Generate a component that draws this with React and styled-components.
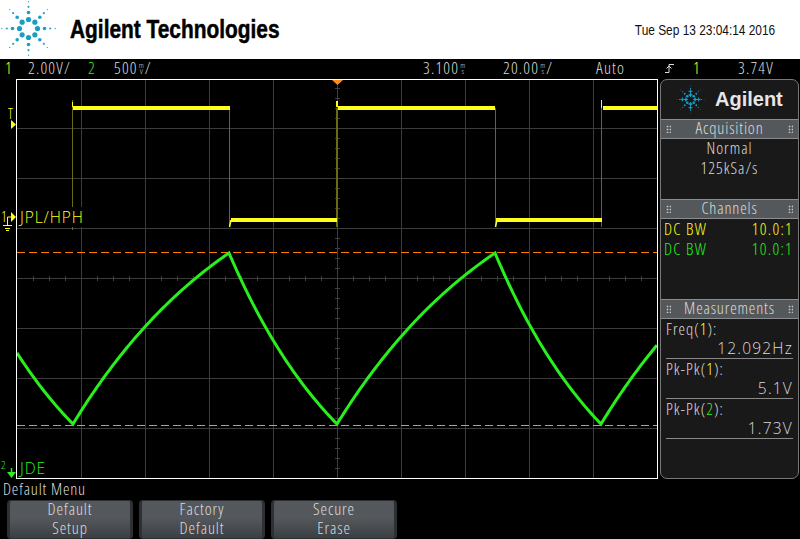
import React from 'react';
import styled, { createGlobalStyle } from 'styled-components';

const Global = createGlobalStyle`
  html, body { margin: 0; padding: 0; background: #000; }
  #root { width: 800px; height: 539px; overflow: hidden; }
`;
const UI = `"Open Sans", "Liberation Sans", sans-serif`;
const Y = '#ffff1e';
const G = '#27f01c';
const Page = styled.div`
  width: 800px; height: 539px; display: flex; flex-direction: column;
  background: #000; font-family: ${UI}; font-weight: 300; font-stretch: 75%; font-size: 16.5px; color: #dcdcdc;
`;
const Header = styled.header`
  height: 59px; background: #fff; display: flex; align-items: center; color: #000; flex: none;
`;
const LogoSlot = styled.div`width: 70px; height: 59px; flex: none;`;
const Brand = styled.h1`
  margin: 0; font: 700 25px "Liberation Sans", sans-serif; color: #000; white-space: nowrap; flex: 1;
  transform: scaleX(.835); transform-origin: left center; -webkit-text-stroke: .5px #000;
`;
const Clock = styled.div`
  font: 400 14.5px "Liberation Sans", sans-serif; margin-right: 25px; white-space: nowrap; color: #111;
  transform: scaleX(.82); transform-origin: right center;
`;
const Status = styled.div`
  height: 20px; flex: none; display: grid; letter-spacing: 1.2px; line-height: 18px; padding-left: 5px; box-sizing: border-box;
  grid-template-columns: 23px 60px 26px 309px 80px 93px 69px 28px 45px auto;
`;
const Value = styled.span`color: ${p => p.$c || '#dcdcdc'}; white-space: nowrap; display: flex; align-items: center; height: 18px;`;
const Unit = styled.span`
  display: flex; flex-direction: column; font-size: 8px; line-height: 6px; letter-spacing: 0; text-align: center; margin: 0 1px;
`;
const Main = styled.div`height: 400px; flex: none; display: flex; align-items: flex-start;`;
const Scope = styled.div`
  position: relative; width: 642px; flex: none; margin-left: 16px; height: 400px; border: 1px solid #fff; box-sizing: border-box;
  & > svg { display: block; }
`;
const ScopeLabel = styled.span`
  position: absolute; left: 0; top: ${p => p.$t}px; height: 20px; padding-left: 3px; background: #000; color: ${p => p.$c}; font-stretch: 100%; font-size: 15.5px; letter-spacing: .9px; line-height: 20px; white-space: nowrap;
`;
const GutterText = styled.span`
  position: absolute; left: ${p => p.$l}px; top: ${p => p.$t}px; color: ${p => p.$c}; font-size: ${p => p.$s}px; line-height: 12px;
`;
const Gutter = styled.svg`position: absolute; left: -17px; top: 0; overflow: visible;`;
const Side = styled.aside`
  width: 139px; margin-left: 2px; height: 400px; box-sizing: border-box; background: #191919; border: 1px solid #777; border-radius: 7px; display: flex; flex-direction: column; overflow: hidden;
`;
const SideLogo = styled.div`height: 39px; display: flex; align-items: center; gap: 10px; padding-left: 15px; color: #e6e6e6; font: 700 20px "Liberation Sans", sans-serif; flex: none;`;
const SecHead = styled.div`
  height: 20px; box-sizing: border-box; flex: none; background: #54585b; border: solid #8a8d8f; border-width: 1px 0; color: #dcdcdc; text-align: center; line-height: 16px; letter-spacing: .85px; position: relative;
  &::before, &::after { content: ''; position: absolute; top: 5px; width: 5px; height: 8px; background: radial-gradient(circle, #c4c4c4 0.8px, transparent 1.1px) 0 0 / 3px 3px; }
  &::before { left: 5px; } &::after { right: 5px; }
`;
const Sec = styled.section`height: ${p => p.$h}px; flex: none; box-sizing: border-box; letter-spacing: 1px;`;
const Center = styled.div`text-align: center; line-height: 20px; color: #dcdcdc; position: relative; top: -1px;`;
const Chan = styled.div`display: flex; justify-content: space-between; color: ${p => p.$c}; line-height: 20px; padding: 0 5px 0 3px; letter-spacing: 1.3px;`;
const MeasName = styled.div`line-height: 19px; padding-left: 5px; color: #dcdcdc; height: 20px;`;
const MeasVal = styled.div`line-height: 19px; height: 20px; box-sizing: border-box; margin: 0 5px; text-align: right; border-bottom: 1px solid #8a8a8a; color: #dcdcdc; font-stretch: 100%; font-size: 15.5px; letter-spacing: 1.2px;`;
const C = styled.span`color: ${p => p.$c};`;
const Footer = styled.footer`flex: none; height: 60px; padding-left: 3px; display: flex; flex-direction: column;`;
const MenuTitle = styled.div`height: 21px; line-height: 19px; color: #dcdcdc; letter-spacing: .8px;`;
const Keys = styled.div`display: flex; gap: 6px; padding-left: 4px;`;
const Key = styled.button`
  width: 126px; height: 39px; padding: 0 0 4px; box-sizing: border-box; display: flex; flex-direction: column; align-items: center; justify-content: center;
  border: 1px solid #2e3134; border-width: 1px 3px; border-radius: 4px; color: #dcdcdc; font: inherit; line-height: 19px; letter-spacing: .9px;
  background: linear-gradient(#54585c 0%, #54585c 45%, #3c3f42 100%);
`;

function Spark({ size, cross }) {
  const c = 28.5;
  const rings = [
    { r: 9, s: 2.6, col: '#1b9cc0' },
    { r: 16, s: 1.8, col: '#1f9dc3' },
    { r: 21.7, s: 1.1, col: '#2aa3c8' },
    { r: 26.7, s: .7, col: '#3dabcc' },
  ];
  const dots = [];
  rings.forEach((g, i) => {
    for (let k = 0; k < 8; k++) {
      const a = k * 45 * Math.PI / 180;
      const x = c + g.r * Math.cos(a), y = c + g.r * Math.sin(a);
      const axis = k % 2 === 0;
      dots.push(<circle key={i + '-' + k} cx={x} cy={y} r={g.s} fill={g.col} />);
      if (cross && axis && i < 2) {
        dots.push(<path key={'x' + i + k} d={`M${x - 4} ${y}H${x + 4}M${x} ${y - 4}V${y + 4}`} stroke={g.col} strokeWidth="1.8" />);
      }
    }
  });
  return <svg width={size} height={size} viewBox="0 0 57 57">{dots}</svg>;
}

const X = x => x - 17;
const Yc = y => y - 80;

function wavePoints() {
  const up = 180, dn = 130;
  const rise = t => (1 - Math.exp(-t / up)) / (1 - Math.exp(-156 / up));
  const fall = t => (Math.exp(-t / dn) - Math.exp(-108 / dn)) / (1 - Math.exp(-108 / dn));
  const pts = [];
  for (let x = 17; x < 73; x += 2) pts.push([x, 424 - fall(x - 17 + 52) * 171]);
  const segs = [[73, 229, 1], [229, 337, 0], [337, 495, 1], [495, 601, 0], [601, 657, 1]];
  segs.forEach(([a, b, r]) => {
    for (let x = a; x < b; x += 2) pts.push([x, 424 - (r ? rise((x - a) * 156 / (b - a > 100 ? b - a : 156)) : fall((x - a) * 108 / (b - a))) * 171]);
  });
  pts.push([657, 424 - rise(56) * 171]);
  return pts.map(([x, y]) => `${X(x)},${Yc(y)}`).join(' ');
}

function Plot() {
  const vs = [81, 145, 209, 273, 337, 401, 465, 529, 593];
  const hs = [128, 178, 228, 278, 328, 378, 428];
  const ticks = [];
  for (let x = 33; x <= 657; x += 16) if ((x - 17) % 64 !== 0) ticks.push(<rect key={'t' + x} x={X(x)} width={1} y={Yc(276)} height={5} fill="#3f3f3f" />);
  for (let y = 88; y <= 478; y += 10) if ((y - 78) % 50 !== 0) ticks.push(<rect key={'v' + y} x={X(335)} width={5} y={Yc(y)} height={1} fill="#3f3f3f" />);
  return (
    <svg width="640" height="398" viewBox="0 0 640 398" shapeRendering="crispEdges">
      {vs.map(x => <rect key={x} x={X(x)} y={0} width={1} height={398} fill="#3c3c3c" />)}
      {hs.map(y => <rect key={y} y={Yc(y)} x={0} height={1} width={640} fill="#3c3c3c" />)}
      {ticks}
      <g fill="#6a6a10">
        <rect x={X(72)} y={Yc(100)} width={1} height={130} />
        <rect x={X(229)} y={Yc(108)} width={1} height={119} />
        <rect x={X(336)} y={Yc(108)} width={2} height={119} />
        <rect x={X(495)} y={Yc(108)} width={1} height={119} />
        <rect x={X(601)} y={Yc(100)} width={1} height={127} />
      </g>
      <g fill={Y}>
        <rect x={X(73)} y={Yc(106)} width={157} height={4} />
        <rect x={X(231)} y={Yc(218)} width={106} height={4} />
        <rect x={X(338)} y={Yc(106)} width={157} height={4} />
        <rect x={X(496)} y={Yc(218)} width={106} height={4} />
        <rect x={X(603)} y={Yc(106)} width={54} height={4} />
        <rect x={X(72)} y={Yc(102)} width={1} height={5} />
        <rect x={X(336)} y={Yc(101)} width={2} height={6} />
        <rect x={X(601)} y={Yc(100)} width={1} height={8} />
      </g>
      <path d={`M${X(229.500)} ${Yc(227)}L${X(231)} ${Yc(220)}M${X(495.500)} ${Yc(227)}L${X(497)} ${Yc(220)}`} stroke={Y} fill="none" strokeWidth="1.5" shapeRendering="auto" />
      <line x1={0} x2={640} y1={Yc(252) + .5} y2={Yc(252) + .5} stroke="#ff7a00" strokeDasharray="8 4" />
      <line x1={0} x2={640} y1={Yc(425) + .5} y2={Yc(425) + .5} stroke="#e8962e" strokeDasharray="8 4" />
      <polyline points={wavePoints()} fill="none" stroke={G} strokeWidth="3" shapeRendering="auto" strokeLinejoin="miter" />
      <polygon points={`${X(332)},0 ${X(343)},0 ${X(337.5)},5`} fill="#ff8a1c" shapeRendering="auto" />
    </svg>
  );
}

function Markers() {
  return (
    <Gutter width="17" height="400" viewBox="0 0 17 400">
      <polygon points="11,40 16,44.500 11,49" fill={Y} />
      <polygon points="11,132 16,137 11,142" fill={Y} />
      <path d="M7.500 137V145M7.500 137H11M3 145.500H12M5 148.500H10M6 150.500H9" stroke={Y} fill="none" />
      <path d="M11.500 388V393" stroke={G} strokeWidth="1.500" fill="none" />
      <polygon points="7,392 16,392 11.500,398" fill={G} />
    </Gutter>
  );
}

export default function App() {
  return (
    <Page>
      <Global />
      <Header>
        <LogoSlot><Spark size={57} /></LogoSlot>
        <Brand>Agilent Technologies</Brand>
        <Clock>Tue Sep 13 23:04:14 2016</Clock>
      </Header>
      <Status>
        <Value $c={Y}>1</Value>
        <Value>2.00V/</Value>
        <Value $c={G}>2</Value>
        <Value>500<Unit><span>m</span><span>V</span></Unit>/</Value>
        <Value>3.100<Unit><span>m</span><span>s</span></Unit></Value>
        <Value>20.00<Unit><span>m</span><span>s</span></Unit>/</Value>
        <Value>Auto</Value>
        <Value><svg width="9" height="11" viewBox="0 0 9 11"><path d="M0 9.500H4V1.500H9M1.500 5.500L4 3L6.500 5.500" stroke="#dcdcdc" fill="none" /></svg></Value>
        <Value $c={Y}>1</Value>
        <Value>3.74V</Value>
      </Status>
      <Main>
        <Scope>
          <Plot />
          <Markers />
          <GutterText $l={-9} $t={28} $c={Y} $s={14}>T</GutterText>
          <GutterText $l={-16} $t={131} $c={Y} $s={14}>1</GutterText>
          <GutterText $l={-16} $t={379} $c={G} $s={11}>2</GutterText>
          <ScopeLabel $t={127} $c={Y}>JPL/HPH</ScopeLabel>
          <ScopeLabel $t={378} $c={G}>JDE</ScopeLabel>
        </Scope>
        <Side>
          <SideLogo><Spark size={29} cross /><span>Agilent</span></SideLogo>
          <SecHead>Acquisition</SecHead>
          <Sec $h={60}><Center>Normal</Center><Center>125kSa/s</Center></Sec>
          <SecHead>Channels</SecHead>
          <Sec $h={80}>
            <Chan $c={Y}><span>DC BW</span><span>10.0:1</span></Chan>
            <Chan $c={G}><span>DC BW</span><span>10.0:1</span></Chan>
          </Sec>
          <SecHead>Measurements</SecHead>
          <Sec $h={120}>
            <MeasName>Freq(<C $c={Y}>1</C>):</MeasName>
            <MeasVal>12.092Hz</MeasVal>
            <MeasName>Pk-Pk(<C $c={Y}>1</C>):</MeasName>
            <MeasVal>5.1V</MeasVal>
            <MeasName>Pk-Pk(<C $c={G}>2</C>):</MeasName>
            <MeasVal>1.73V</MeasVal>
          </Sec>
        </Side>
      </Main>
      <Footer>
        <MenuTitle>Default Menu</MenuTitle>
        <Keys>
          <Key><span>Default</span><span>Setup</span></Key>
          <Key><span>Factory</span><span>Default</span></Key>
          <Key><span>Secure</span><span>Erase</span></Key>
        </Keys>
      </Footer>
    </Page>
  );
}
